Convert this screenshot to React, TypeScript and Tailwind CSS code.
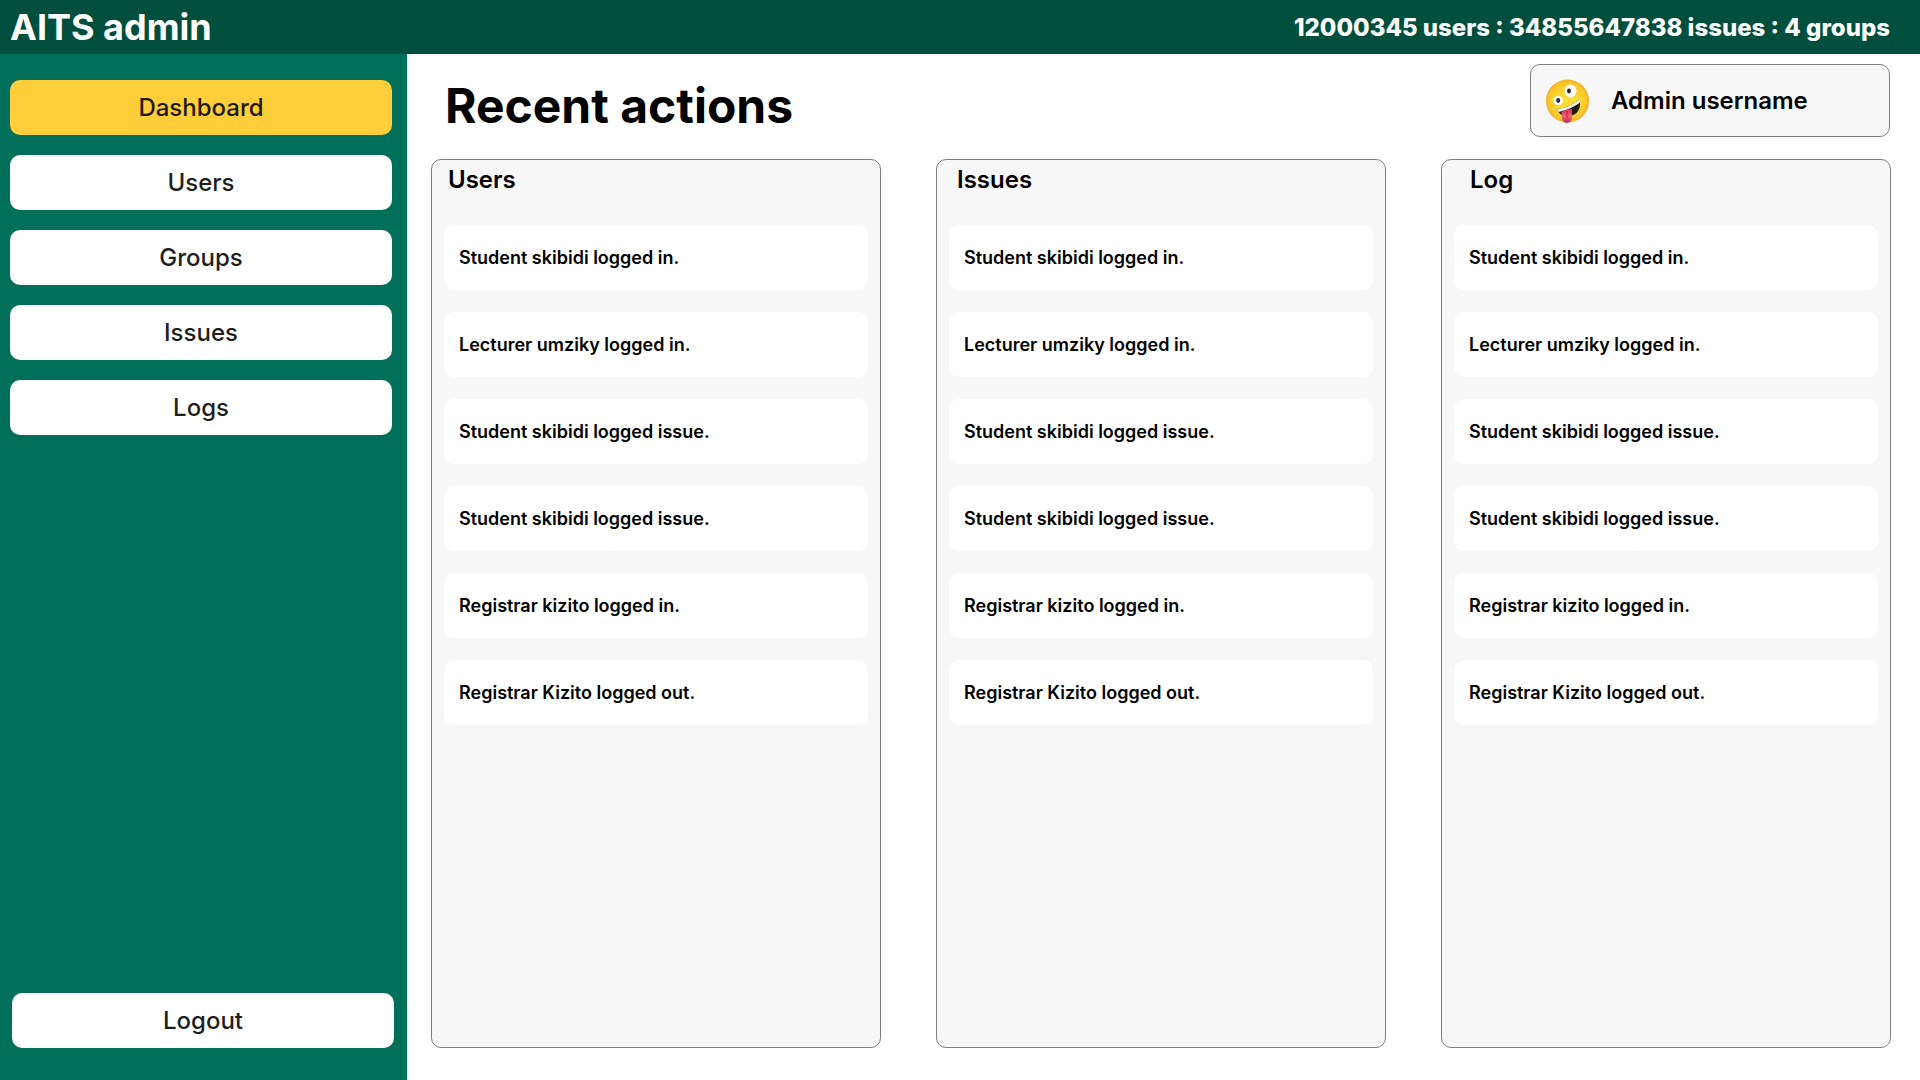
const navItems = ["Dashboard", "Users", "Groups", "Issues", "Logs"];

const actions = [
  "Student skibidi logged in.",
  "Lecturer umziky logged in.",
  "Student skibidi logged issue.",
  "Student skibidi logged issue.",
  "Registrar kizito logged in.",
  "Registrar Kizito logged out.",
];

const panels = [
  { title: "Users", indent: "pl-1" },
  { title: "Issues", indent: "pl-2" },
  { title: "Log", indent: "pl-4" },
];

function ZanyFace() {
  return (
    <svg viewBox="0 0 44 46" className="h-[46px] w-11 shrink-0" role="img" aria-label="Avatar">
      <defs>
        <radialGradient id="face" cx="0.5" cy="0.5" r="0.5">
          <stop offset="0.4" stopColor="#fddc34" />
          <stop offset="0.88" stopColor="#f9c62a" />
          <stop offset="1" stopColor="#f2a922" />
        </radialGradient>
        <linearGradient id="tongue" x1="0" y1="0" x2="0" y2="1">
          <stop offset="0" stopColor="#d8304f" />
          <stop offset="0.5" stopColor="#f0647a" />
          <stop offset="1" stopColor="#c22a44" />
        </linearGradient>
      </defs>
      <circle cx="22.500" cy="23" r="21.500" fill="url(#face)" />
      <ellipse cx="25.500" cy="13" rx="6" ry="6.500" fill="#fff" />
      <ellipse cx="13" cy="22.500" rx="5" ry="4.600" fill="#fff" />
      <ellipse cx="24" cy="13" rx="2" ry="2.400" fill="#2b2b2b" />
      <ellipse cx="13.200" cy="22.500" rx="2" ry="2.400" fill="#2b2b2b" />
      <path d="M12 31C19 30.500 28 27 34.500 21C36.500 28.500 33.500 35.500 27 37.500C20 39.500 14.500 37.500 12 31Z" fill="#1f1a17" />
      <path d="M12 31C19 30.500 28 27 34.500 21C35.200 22.500 35.200 23.700 34.600 25C28 29.500 21 32.500 13.500 34Z" fill="#f1eee9" />
      <path d="M16.500 34C19.500 32 24 31 27 31L26.800 40C26.500 46.500 17.500 46.500 17 40Z" fill="url(#tongue)" />
      <path d="M22 33.500V39.500" stroke="#b5203a" strokeWidth="1" strokeLinecap="round" />
    </svg>
  );
}

export default function App() {
  return (
    <div className="flex min-h-screen flex-col bg-white font-['Inter',sans-serif] text-black">
      <header className="flex h-[54px] items-center justify-between bg-[#004e3d] pr-[30px] pl-2.5 text-white">
        <div className="text-4xl font-bold">AITS admin</div>
        <p className="pt-0.5 text-2xl font-extrabold">12000345 users : 34855647838 issues : 4 groups</p>
      </header>
      <div className="flex flex-1">
        <aside className="flex w-[407px] shrink-0 flex-col justify-between bg-[#00705a] pt-[26px] pb-8 text-2xl font-medium text-[#1e1e1e]">
          <nav className="flex flex-col gap-5 pr-[15px] pl-2.5">
            {navItems.map((item, i) => (
              <button
                key={item}
                type="button"
                className={
                  i === 0
                    ? "h-[55px] rounded-[10px] bg-[#ffce3a] text-[#1e1a06]"
                    : "h-[55px] rounded-[10px] bg-white"
                }
              >
                {item}
              </button>
            ))}
          </nav>
          <div className="flex pr-[13px] pl-3">
            <button type="button" className="h-[55px] flex-1 rounded-[10px] bg-white">
              Logout
            </button>
          </div>
        </aside>
        <main className="flex flex-1 flex-col pt-2.5 pr-[29px] pb-8 pl-6">
          <div className="flex items-start justify-between pr-px">
            <h1 className="pt-3 pl-3.5 text-5xl leading-[60px] font-bold">Recent actions</h1>
            <div className="flex h-[73px] w-[360px] items-center gap-[22px] rounded-[10px] border border-[#7f7f7f] bg-[#f7f7f7] px-3.5">
              <ZanyFace />
              <span className="text-2xl font-semibold">Admin username</span>
            </div>
          </div>
          <div className="mt-[22px] grid flex-1 grid-cols-3 gap-[55px]">
            {panels.map((panel) => (
              <section
                key={panel.title}
                className="rounded-[10px] border border-[#7f7f7f] bg-[#f7f7f7] px-3"
              >
                <h2 className={"pt-1 text-2xl font-semibold " + panel.indent}>{panel.title}</h2>
                <ul className="mt-[29px] flex flex-col gap-[22px]">
                  {actions.map((action, i) => (
                    <li
                      key={i}
                      className="flex h-[65px] items-center rounded-[10px] bg-white px-[15px] text-lg font-semibold"
                    >
                      {action}
                    </li>
                  ))}
                </ul>
              </section>
            ))}
          </div>
        </main>
      </div>
    </div>
  );
}
